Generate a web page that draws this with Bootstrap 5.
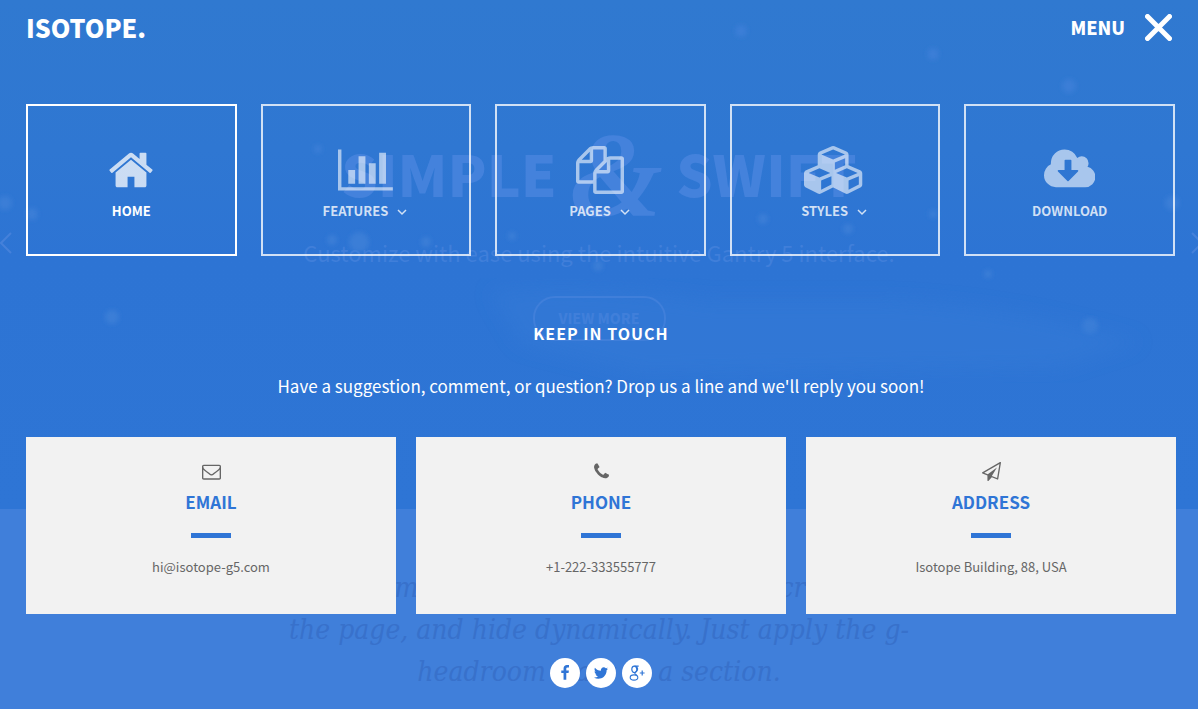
<!DOCTYPE html>
<html lang="en">
<head>
<meta charset="utf-8">
<meta name="viewport" content="width=device-width, initial-scale=1">
<title>Isotope</title>
<link href="https://cdn.jsdelivr.net/npm/bootstrap@5.3.0/dist/css/bootstrap.min.css" rel="stylesheet">
<style>
  :root { --brand: #2f75d6; --panel: #f2f2f2; --ink: #666; }
  body { font-family: "Noto Sans CJK SC", "Noto Sans", sans-serif; background: #407fda; color: #fff; }
  a { text-decoration: none; }
  /* dimmed page and open menu share one grid cell */
  .stack { display: grid; grid-template-columns: minmax(0, 1fr); min-height: 100vh; }
  .stack > * { grid-area: 1 / 1; }

  /* dimmed page */
  .under { overflow: hidden; height: 0; min-height: 100%; text-align: center; }
  .slide-show { position: relative; height: 509px; padding-top: 128px;
    background: linear-gradient(180deg, #3079d0 0, #2f77d2 150px, #2d74d4 260px, #2e75d5 509px); }
  .slide-show > * { position: relative; }
  .slide-show .backdrop { position: absolute; inset: 0; width: 100%; height: 100%; }
  .slide-title { font-size: 57px; line-height: 88px; height: 88px; font-weight: 900; color: #4482dc; }
  .slide-title .amp { font: italic 700 120px/1px "Liberation Serif", serif; vertical-align: -19px; }
  .slide-text { font-size: 22px; line-height: 32px; color: #407fda; margin-top: 20px; }
  .slide-more { border: 2px solid #407fda; border-radius: 22px; width: 133px; height: 45px; font-size: 14px; font-weight: 900; color: #407fda; margin-top: 28px; background: none; padding: 0; }
  .slide-show .arrow { position: absolute; top: 231px; width: 14px; height: 24px; border: 0; padding: 0; background: none; color: #4581da; line-height: 1; }
  .arrow.prev { left: -1px; } .arrow.next { right: -6px; }
  .quote { font: italic 28px/42px "DejaVu Serif Condensed", "DejaVu Serif", "Liberation Serif", serif; color: #3871cb; max-width: 680px; margin: 58px auto 0; }

  /* open menu */
  .over { position: relative; padding: 0 22px 0 26px; }
  .brand-name { font-size: 25px; line-height: 54px; font-weight: 900; color: #fff; }
  .menu-toggle { background: none; border: 0; padding: 0 4px 0 0; color: #fff; font-size: 18px; line-height: 54px; font-weight: 900; gap: 20px; }
  .tiles { display: grid; grid-template-columns: repeat(5, minmax(0, 1fr)); gap: 24px; margin: 50px 1px 0 0; }
  .tile { border: 2px solid rgba(255,255,255,.78); height: 152px; padding-top: 40px; color: rgba(255,255,255,.78); font-size: 13px; line-height: 20px; font-weight: 700; text-align: center; display: block; }
  .tile svg.glyph { display: block; height: 48px; margin: 0 auto 7px; opacity: .75; }
  .tile.active { border-color: #fff; color: #fff; }
  .tile svg.caret { width: 10px; height: 7px; margin: 0 2px 0 6px; }
  .touch-title { font-size: 16px; line-height: 24px; font-weight: 700; letter-spacing: 1px; margin: 65px 0 0; }
  .touch-text { font-size: 17px; line-height: 28px; margin: 27px 0 0; }
  .contacts { display: grid; grid-template-columns: repeat(3, minmax(0, 1fr)); gap: 20px; margin-top: 37px; }
  .contact { background: var(--panel); color: var(--ink); height: 177px; padding-top: 25px; font-size: 13px; line-height: 20px; }
  .contact svg { display: block; height: 19px; margin: 0 auto; }
  .contact h3 { color: var(--brand); font-size: 17px; line-height: 24px; font-weight: 700; margin: 9px 0 19px; }
  .contact .bar { width: 40px; height: 5px; background: var(--brand); margin: 0 auto 19px; }
  .contact p { margin: 0; }
  .contact a { color: inherit; }
  .socials { gap: 6px; padding: 44px 0 20px; }
  .socials a { width: 30px; height: 30px; background: #fff; color: var(--brand); }
</style>
</head>
<body>
<div class="stack">
  <div class="under" aria-hidden="true">
    <section class="slide-show">
      <svg class="backdrop" viewBox="0 0 1198 509" preserveAspectRatio="none">
        <defs><filter id="soft"><feGaussianBlur stdDeviation="2"/></filter><filter id="wash"><feGaussianBlur stdDeviation="9"/></filter></defs>
        <g fill="#3b7ed7" filter="url(#soft)">
          <circle cx="741" cy="31" r="6"/><circle cx="933" cy="54" r="6"/><circle cx="1069" cy="86" r="7"/>
          <circle cx="5" cy="203" r="7"/><circle cx="32" cy="214" r="6"/><circle cx="112" cy="317" r="7"/>
          <circle cx="359" cy="242" r="10"/><circle cx="332" cy="240" r="5"/><circle cx="318" cy="149" r="4"/>
          <circle cx="426" cy="242" r="5"/><circle cx="512" cy="236" r="4"/><circle cx="598" cy="266" r="5"/>
          <circle cx="763" cy="219" r="5"/><circle cx="848" cy="229" r="5"/><circle cx="933" cy="214" r="4"/>
          <circle cx="1172" cy="203" r="7"/><circle cx="1090" cy="326" r="8"/><circle cx="988" cy="274" r="4"/>
        </g>
        <g fill="#347ad7" opacity=".5" filter="url(#wash)">
          <path d="M490 292q90-12 220 8l180 0q120 4 250 42l-80 26-420 6-120-30z"/>
        </g>
      </svg>
      <div class="slide-title">SIMPLE <span class="amp">&amp;</span> SWIFT</div>
      <div class="slide-text">Customize with ease using the intuitive Gantry 5 interface.</div>
      <button class="slide-more" tabindex="-1">VIEW MORE</button>
      <button class="arrow prev" tabindex="-1"><svg width="14" height="24" viewBox="0 0 14 24" fill="none" stroke="currentColor" stroke-width="2"><path d="M12 2 2 12l10 10"/></svg></button>
      <button class="arrow next" tabindex="-1"><svg width="14" height="24" viewBox="0 0 14 24" fill="none" stroke="currentColor" stroke-width="2"><path d="M2 2l10 10L2 22"/></svg></button>
    </section>
    <div class="quote">Headroom lets a section react as you scroll down<br>the page, and hide dynamically. Just apply the g-<br>headroom class to a section.</div>
  </div>

  <div class="over">
    <header class="d-flex justify-content-between align-items-start">
      <a class="brand-name" href="#">ISOTOPE.</a>
      <button class="menu-toggle d-flex align-items-center" type="button">MENU
        <svg width="27" height="27" viewBox="0 0 27 27" stroke="currentColor" stroke-width="5" stroke-linecap="round"><path d="M2.500 2.500l22 22M24.500 2.500l-22 22"/></svg>
      </button>
    </header>

    <nav class="tiles">
      <a class="tile active" href="#"><svg class="glyph" viewBox="0 0 1792 1792" fill="currentColor"><path d="M1472 992v480q0 26-19 45t-45 19h-384v-384h-256v384h-384q-26 0-45-19t-19-45v-480q0-1 .5-3t.5-3l575-474 575 474q1 2 1 6zm223-69l-62 74q-8 9-21 11h-3q-13 0-21-7l-692-577-692 577q-12 8-24 7-13-2-21-11l-62-74q-8-10-7-23.500t11-21.500l719-599q32-26 76-26t76 26l244 204v-195q0-14 9-23t23-9h192q14 0 23 9t9 23v408l219 182q10 8 11 21.500t-7 23.500z"/></svg>HOME</a>
      <a class="tile" href="#"><svg class="glyph" viewBox="0 0 2048 1792" fill="currentColor"><path d="M640 896v512h-256v-512h256zm384-512v1024h-256v-1024h256zm1024 1152v128h-2048v-1536h128v1408h1920zm-640-896v768h-256v-768h256zm384-384v1152h-256v-1152h256z"/></svg>FEATURES <svg class="caret" viewBox="0 0 10 7" fill="none" stroke="currentColor" stroke-width="1.500"><path d="M1 1l4 4 4-4"/></svg></a>
      <a class="tile" href="#"><svg class="glyph" viewBox="0 0 1792 1792" fill="currentColor"><path d="M1696 384q40 0 68 28t28 68v1216q0 40-28 68t-68 28h-960q-40 0-68-28t-28-68v-288h-544q-40 0-68-28t-28-68v-672q0-40 20-88t48-76l408-408q28-28 76-48t88-20h416q40 0 68 28t28 68v328q68-40 128-40h416zm-544 213l-299 299h299v-299zm-640-384l-299 299h299v-299zm196 647l316-316v-416h-384v416q0 40-28 68t-68 28h-416v640h512v-256q0-40 20-88t48-76zm956 804v-1152h-384v416q0 40-28 68t-68 28h-416v640h896z"/></svg>PAGES <svg class="caret" viewBox="0 0 10 7" fill="none" stroke="currentColor" stroke-width="1.500"><path d="M1 1l4 4 4-4"/></svg></a>
      <a class="tile" href="#"><svg class="glyph" viewBox="0 0 2304 1792" fill="currentColor"><path d="M640 1632l384-192v-314l-384 164v342zm-64-454l404-173-404-173-404 173zm1088 454l384-192v-314l-384 164v342zm-64-454l404-173-404-173-404 173zm-448-293l384-165v-266l-384 164v267zm-64-379l441-189-441-189-441 189zm1088 518v416q0 36-19 67t-52 47l-448 224q-25 14-57 14t-57-14l-448-224q-4-2-7-4-2 2-7 4l-448 224q-25 14-57 14t-57-14l-448-224q-33-16-52-47t-19-67v-416q0-38 21.500-70t56.500-48l434-186v-400q0-38 21.500-70t56.500-48l448-192q23-10 50-10t50 10l448 192q35 16 56.500 48t21.500 70v400l434 186q36 16 57 48t21 70z"/></svg>STYLES <svg class="caret" viewBox="0 0 10 7" fill="none" stroke="currentColor" stroke-width="1.500"><path d="M1 1l4 4 4-4"/></svg></a>
      <a class="tile" href="#"><svg class="glyph" viewBox="-64 0 1920 1792" fill="currentColor"><path d="M1216 928q0-14-9-23t-23-9h-224v-352q0-13-9.500-22.500t-22.500-9.500h-192q-13 0-22.500 9.500t-9.500 22.500v352h-224q-13 0-22.500 9.500t-9.500 22.500q0 14 9 23l352 352q9 9 23 9t23-9l351-351q10-12 10-24zm640 224q0 159-112.500 271.500t-271.500 112.500h-1088q-185 0-316.500-131.500t-131.500-316.500q0-130 70-240t188-165q-2-30-2-43 0-212 150-362t362-150q156 0 285.500 87t188.500 231q71-62 166-62 106 0 181 75t75 181q0 76-41 138 130 31 213.500 135.500t83.500 238.500z"/></svg>DOWNLOAD</a>
    </nav>

    <section class="text-center">
      <h2 class="touch-title">KEEP IN TOUCH</h2>
      <p class="touch-text">Have a suggestion, comment, or question? Drop us a line and we'll reply you soon!</p>
      <div class="contacts">
        <div class="contact">
          <svg viewBox="0 0 1792 1792" fill="currentColor"><path d="M1664 1504v-768q-32 36-69 66-268 206-426 338-51 43-83 67t-86.500 48.500-102.500 24.500h-2q-48 0-102.500-24.500t-86.500-48.500-83-67q-158-132-426-338-37-30-69-66v768q0 13 9.500 22.500t22.500 9.500h1472q13 0 22.500-9.500t9.500-22.500zm0-1051v-24.500l-.5-13-3-12.500-5.500-9-9-7.500-14-2.500h-1472q-13 0-22.500 9.500t-9.500 22.500q0 168 147 284 193 152 401 317 6 5 35 29.500t46 37.500 44.500 31.500 50.500 27.500 43 9h2q20 0 43-9t50.500-27.500 44.500-31.500 46-37.500 35-29.500q208-165 401-317 54-43 100.500-115.500t46.500-131.500zm128-37v1088q0 66-47 113t-113 47h-1472q-66 0-113-47t-47-113v-1088q0-66 47-113t113-47h1472q66 0 113 47t47 113z"/></svg>
          <h3>EMAIL</h3><div class="bar"></div>
          <p><a href="#">hi@isotope-g5.com</a></p>
        </div>
        <div class="contact">
          <svg viewBox="0 0 1792 1792" fill="currentColor"><path d="M1600 1240q0 27-10 70.500t-21 68.500q-21 50-122 106-94 51-186 51-27 0-53-3.500t-57.500-12.500-47-14.500-55.500-20.500-49-18q-98-35-175-83-127-79-264-216t-216-264q-48-77-83-175-3-9-18-49t-20.500-55.500-14.500-47-12.500-57.500-3.500-53q0-92 51-186 56-101 106-122 25-11 68.500-21t70.500-10q14 0 21 3 18 6 53 76 11 19 30 54t35 63.500 31 53.500q3 4 17.500 25t21.500 35.500 7 28.500q0 20-28.500 50t-62 55-62 53-28.500 46q0 9 5 22.500t8.500 20.500 14 24 11.500 19q76 137 174 235t235 174q2 1 19 11.500t24 14 20.500 8.500 22.500 5q18 0 46-28.500t53-62 55-62 50-28.500q14 0 28.500 7t35.500 21.500 25 17.500q25 15 53.500 31t63.500 35 54 30q70 35 76 53 3 7 3 21z"/></svg>
          <h3>PHONE</h3><div class="bar"></div>
          <p>+1-222-333555777</p>
        </div>
        <div class="contact">
          <svg viewBox="0 0 1792 1792" fill="currentColor"><path d="M1764 11q33 24 27 64l-256 1536q-5 29-32 45-14 8-31 8-11 0-24-5l-527-215-298 327q-18 21-47 21-14 0-23-4-19-7-30-23.500t-11-36.500v-452l-472-193q-37-14-40-55-3-39 32-59l1664-960q35-21 68 2zm-342 1499l221-1323-1434 827 336 137 863-639-478 797z"/></svg>
          <h3>ADDRESS</h3><div class="bar"></div>
          <p>Isotope Building, 88, USA</p>
        </div>
      </div>
      <div class="socials d-flex justify-content-center">
        <a class="rounded-circle d-flex align-items-center justify-content-center" href="#" aria-label="Facebook"><svg width="16" height="16" viewBox="0 0 1792 1792" fill="currentColor"><path d="M1343 12v264h-157q-86 0-116 36t-30 108v189h293l-39 296h-254v759h-306v-759h-255v-296h255v-218q0-186 104-288.500t277-102.500q147 0 228 12z"/></svg></a>
        <a class="rounded-circle d-flex align-items-center justify-content-center" href="#" aria-label="Twitter"><svg width="16" height="16" viewBox="0 0 1792 1792" fill="currentColor"><path d="M1684 408q-67 98-162 167 1 14 1 42 0 130-38 259.500t-115.500 248.500-184.500 210.500-258 146-323 54.500q-271 0-496-145 35 4 78 4 225 0 401-138-105-2-188-64.500t-114-159.500q33 5 61 5 43 0 85-11-112-23-185.500-111.500t-73.500-205.500v-4q68 38 146 41-66-44-105-115t-39-154q0-88 44-163 121 149 294.500 238.500t371.500 99.500q-8-38-8-74 0-134 94.500-228.500t228.500-94.500q140 0 236 102 109-21 205-78-37 115-142 178 93-10 186-50z"/></svg></a>
        <a class="rounded-circle d-flex align-items-center justify-content-center" href="#" aria-label="Google Plus"><svg width="16" height="16" viewBox="0 0 16 16" fill="none" stroke="currentColor"><ellipse cx="5.300" cy="4.300" rx="2.500" ry="3.200" stroke-width="1.200"/><path d="M5.500 1.100h4.200M7.300 1.500q2.400 2.500.5 4.600-2 1.700-2 2.300 0 .7 2 1.900" stroke-width="1.100"/><ellipse cx="5" cy="12.500" rx="3.800" ry="2.600" stroke-width="1.100"/><path d="M10.800 8h4.800M13.200 5.600v4.800" stroke-width="1.200"/></svg></a>
      </div>
    </section>
  </div>
</div>
<script src="https://cdn.jsdelivr.net/npm/bootstrap@5.3.0/dist/js/bootstrap.bundle.min.js"></script>
</body>
</html>
